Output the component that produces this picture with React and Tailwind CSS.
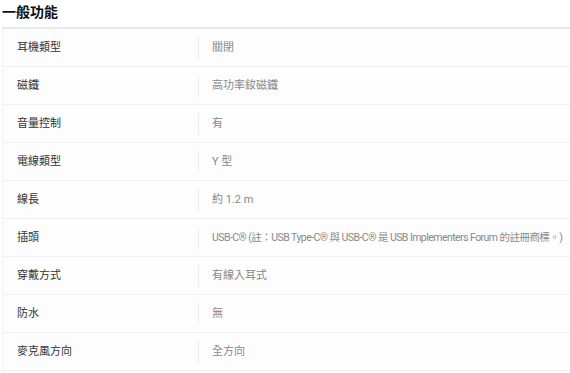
const rows = [
  ['耳機類型', '關閉'],
  ['磁鐵', '高功率釹磁鐵'],
  ['音量控制', '有'],
  ['電線類型', 'Y 型'],
  ['線長', '約 1.2 m'],
  ['插頭', 'USB-C® (註：USB Type-C® 與 USB-C® 是 USB Implementers Forum 的註冊商標。)', true],
  ['穿戴方式', '有線入耳式'],
  ['防水', '無'],
  ['麥克風方向', '全方向'],
]

export default function App() {
  return (
    <div className="w-[570px] h-[373px] overflow-hidden bg-white font-['Roboto','Noto_Sans_CJK_TC',sans-serif]">
      <h2 className="pl-[2px] pt-[2px] h-[27px] text-[14px] leading-[20px] font-bold text-[#111]">一般功能</h2>
      <div className="ml-[2px] border-t-2 border-[#e8e8ee]">
        {rows.map(([k, v, long]) => (
          <div key={k} className="flex items-center pt-[1px] h-[38px] border-b border-l border-[#f0f0f0] bg-[#fdfdfd]">
            <div className="w-[195px] shrink-0 pl-[14px] text-[11px] text-[#333]">{k}</div>
            <div className="w-px shrink-0 h-[22px] bg-[#ececec]" />
            <div className={long ? 'pl-[13px] text-[10.5px] tracking-[-0.55px] text-[#888] whitespace-nowrap' : 'pl-[13px] text-[11px] text-[#888] whitespace-nowrap'}>{v}</div>
          </div>
        ))}
      </div>
    </div>
  )
}
